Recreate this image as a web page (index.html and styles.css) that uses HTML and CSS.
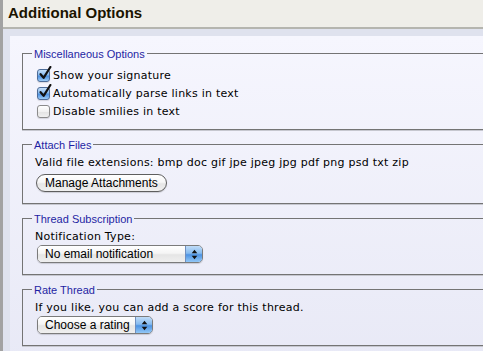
FILE: index.html
```html
<!DOCTYPE html>
<html>
<head>
<meta charset="utf-8">
<title>Additional Options</title>
<link rel="stylesheet" href="styles.css">
</head>
<body>
<div class="page">
  <div class="header"><h2 class="title">Additional Options</h2></div>
  <div class="panel">
    <div class="panel-inner">
      <fieldset class="group group-misc">
        <legend>Miscellaneous Options</legend>
        <label class="check-row"><span class="checkbox checked"><svg class="tick" width="14" height="15" viewBox="0 0 14 15"><path d="M2.6 8.2 L5.6 11.8 L12.4 1" fill="none" stroke="#111" stroke-width="2.2" stroke-linecap="round" stroke-linejoin="round"/></svg></span>Show your signature</label>
        <label class="check-row"><span class="checkbox checked"><svg class="tick" width="14" height="15" viewBox="0 0 14 15"><path d="M2.6 8.2 L5.6 11.8 L12.4 1" fill="none" stroke="#111" stroke-width="2.2" stroke-linecap="round" stroke-linejoin="round"/></svg></span>Automatically parse links in text</label>
        <label class="check-row"><span class="checkbox"></span>Disable smilies in text</label>
      </fieldset>

      <fieldset class="group">
        <legend>Attach Files</legend>
        <p class="note">Valid file extensions: bmp doc gif jpe jpeg jpg pdf png psd txt zip</p>
        <button class="btn" type="button">Manage Attachments</button>
      </fieldset>

      <fieldset class="group">
        <legend>Thread Subscription</legend>
        <p class="note">Notification Type:</p>
        <span class="select select-wide">
          <span class="select-value">No email notification</span>
          <span class="select-arrows"><svg width="7" height="11" viewBox="0 0 7 11"><path d="M3.5 0.8 L6.3 4.2 L0.7 4.2 Z M0.7 6.8 L6.3 6.8 L3.5 10.2 Z" fill="#111"/></svg></span>
        </span>
      </fieldset>

      <fieldset class="group">
        <legend>Rate Thread</legend>
        <p class="note">If you like, you can add a score for this thread.</p>
        <span class="select select-narrow">
          <span class="select-value">Choose a rating</span>
          <span class="select-arrows"><svg width="7" height="11" viewBox="0 0 7 11"><path d="M3.5 0.8 L6.3 4.2 L0.7 4.2 Z M0.7 6.8 L6.3 6.8 L3.5 10.2 Z" fill="#111"/></svg></span>
        </span>
      </fieldset>
    </div>
  </div>
</div>
</body>
</html>
```
FILE: styles.css
```css
html, body {
  margin: 0;
  padding: 0;
  overflow: hidden;
}

body {
  background: #e8e9f6;
  font-family: "DejaVu Sans", Verdana, sans-serif;
  font-size: 11px;
  letter-spacing: 0.25px;
  color: #000;
}

.page {
  width: 640px;
  border-left: 3px solid #a2a2a2;
}

.header {
  height: 27px;
  background: #efeee9;
  border-bottom: 2px solid #b5b5af;
  padding-left: 5px;
}

.title {
  margin: 0;
  font: bold 15px/26px "Liberation Sans", Arial, sans-serif;
  letter-spacing: 0;
  color: #1b1400;
}

.panel {
  background: #dfe2ee;
  padding: 7px 0 0 7px;
}

.panel-inner {
  background: linear-gradient(#f6f6fe, #e8e9f6);
  padding: 10px 0 12px 12px;
}

.group {
  margin: 0 0 7px;
  padding: 4px 12px 11px;
  border: 1px solid #747474;
  box-shadow: 0 1px 0 #c6c7cf;
  min-width: 0;
}

.group-misc {
  padding-top: 6px;
  padding-bottom: 9px;
}

.group legend {
  font: 11px/12px "Liberation Sans", Arial, sans-serif;
  letter-spacing: 0;
  color: #1f1fa3;
  padding: 2px 2px 0;
  margin-left: -3px;
}

.check-row {
  display: flex;
  align-items: center;
  height: 18px;
}

.checkbox {
  position: relative;
  box-sizing: border-box;
  width: 13px;
  height: 13px;
  margin: 0 3px 0 2px;
  border: 1px solid #8b8b8b;
  border-radius: 3px;
  background: linear-gradient(#ffffff, #f1f1f1 50%, #e2e2e2 51%, #f0f0f0);
  box-shadow: 0 1px 1px rgba(0, 0, 0, 0.12);
}

.checkbox.checked {
  border-color: #4d6c98;
  background: linear-gradient(#c4def9, #85b9ee 45%, #4a8fe0 55%, #9ccbf6);
}

.tick {
  position: absolute;
  left: 0;
  top: -4px;
}

.note {
  margin: 0;
  line-height: 16px;
}

.btn {
  display: block;
  box-sizing: border-box;
  height: 18px;
  margin: 3px 0 0 1px;
  padding: 0 8px;
  border: 1px solid #5e5e5e;
  border-radius: 9px;
  background: linear-gradient(#ffffff, #f7f7f7 45%, #e6e6e6 55%, #f0f0f0);
  box-shadow: 0 1px 1px rgba(0, 0, 0, 0.15);
  font: 12px/16px "Liberation Sans", Arial, sans-serif;
  letter-spacing: 0;
  color: #000;
}

.select {
  display: flex;
  box-sizing: border-box;
  height: 18px;
  margin-left: 2px;
  border: 1px solid #7b7b7b;
  border-radius: 5px;
  overflow: hidden;
  box-shadow: 0 1px 1px rgba(0, 0, 0, 0.15);
  font: 12px/16px "Liberation Sans", Arial, sans-serif;
  letter-spacing: 0;
}

.select-wide {
  width: 166px;
}

.select-narrow {
  width: 116px;
}

.select-value {
  flex: 1;
  padding-left: 7px;
  background: linear-gradient(#ffffff, #f5f5f5 45%, #e5e5e5 55%, #efefef);
  white-space: nowrap;
}

.select-arrows {
  display: flex;
  align-items: center;
  justify-content: center;
  width: 16px;
  border-left: 1px solid #6f8fbf;
  background: linear-gradient(#c0dcf8, #86bbef 45%, #4d93e3 55%, #93c8f6);
}
```
